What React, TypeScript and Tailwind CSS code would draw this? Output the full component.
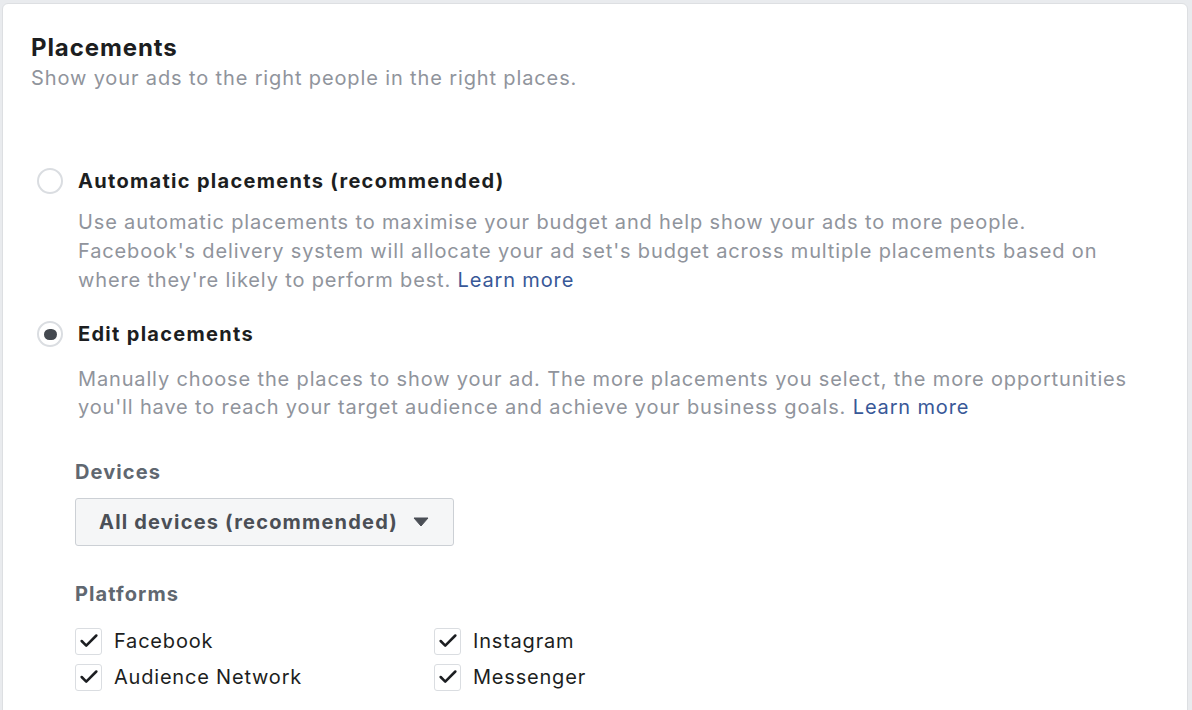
import { Check } from 'lucide-react'

const font = { fontFamily: 'Inter, "Noto Sans", sans-serif' }

function Radio({ checked }: { checked?: boolean }) {
  return (
    <span className="w-[26px] h-[26px] shrink-0 rounded-full border-2 border-[#dadde1] bg-white flex items-center justify-center">
      {checked && <span className="w-[13px] h-[11px] rounded-full bg-[#444950]" />}
    </span>
  )
}

function CheckItem({ label }: { label: string }) {
  return (
    <label className="flex items-center gap-[12px] h-[36px]">
      <span className="w-[27px] h-[27px] shrink-0 rounded-[3px] border border-[#dadde1] bg-white flex items-center justify-center">
        <Check className="w-[22px] h-[22px] text-[#1c1e21]" strokeWidth={2.8} />
      </span>
      <span className="text-[20px] tracking-[0.8px] text-[#1c1e21]">{label}</span>
    </label>
  )
}

export default function App() {
  return (
    <div className="w-[1192px] h-[710px] overflow-hidden bg-[#e9ebee] pt-[3px] pl-[2px] pr-[4px]" style={font}>
      <div className="h-[720px] bg-white border border-[#dddfe2] rounded-[6px] pl-[28px] pt-[29px]">
        <h2 className="text-[24px] font-bold tracking-[0.9px] text-[#1c1e21] leading-[30px]">Placements</h2>
        <p className="text-[20px] tracking-[0.87px] text-[#90949c] leading-[30px]">Show your ads to the right people in the right places.</p>

        <div className="mt-[73px] pl-[6px]">
          <div className="flex items-center gap-[15px] h-[30px]">
            <Radio />
            <span className="text-[20px] font-bold tracking-[1.3px] text-[#1c1e21]">Automatic placements (recommended)</span>
          </div>
          <p className="ml-[41px] mt-[12px] text-[20px] tracking-[0.85px] leading-[29px] text-[#90949c] whitespace-nowrap">
            Use automatic placements to maximise your budget and help show your ads to more people.<br />
            Facebook's delivery system will allocate your ad set's budget across multiple placements based on<br />
            where they're likely to perform best.{' '}
            <span className="text-[#385898]">Learn more</span>
          </p>

          <div className="flex items-center gap-[15px] h-[30px] mt-[24px]">
            <Radio checked />
            <span className="text-[20px] font-bold tracking-[1.3px] text-[#1c1e21]">Edit placements</span>
          </div>
          <p className="ml-[41px] mt-[16px] text-[20px] tracking-[0.85px] leading-[28px] text-[#90949c] whitespace-nowrap">
            Manually choose the places to show your ad. The more placements you select, the more opportunities<br />
            you'll have to reach your target audience and achieve your business goals.{' '}
            <span className="text-[#385898]">Learn more</span>
          </p>

          <div className="ml-[38px] mt-[36px]">
            <div className="text-[20px] font-bold tracking-[1.1px] text-[#606770] leading-[30px]">Devices</div>
            <button className="mt-[11px] h-[48px] w-[379px] flex items-center gap-[15px] pl-[23px] bg-[#f5f6f7] border border-[#ccd0d5] rounded-[3px]">
              <span className="text-[20px] font-bold tracking-[1.2px] text-[#4b4f56]">All devices (recommended)</span>
              <svg width="16" height="10" viewBox="0 0 16 10"><path d="M1 1h14l-7 8z" fill="#4b4f56" stroke="#4b4f56" strokeLinejoin="round" /></svg>
            </button>

            <div className="mt-[33px] text-[20px] font-bold tracking-[1.1px] text-[#606770] leading-[30px]">Platforms</div>
            <div className="mt-[14px] grid grid-cols-[359px_1fr]">
              <CheckItem label="Facebook" />
              <CheckItem label="Instagram" />
              <CheckItem label="Audience Network" />
              <CheckItem label="Messenger" />
            </div>
          </div>
        </div>
      </div>
    </div>
  )
}
